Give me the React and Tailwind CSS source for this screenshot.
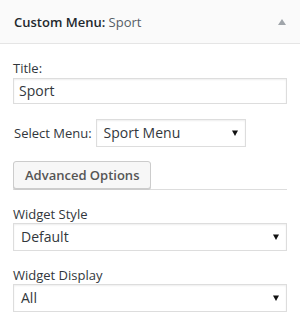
import React from "react";

function Arrow() {
  return (
    <svg width="6" height="6" viewBox="0 0 6 6" className="shrink-0">
      <path d="M0 0.5 H6 L3 6 Z" fill="#111" />
    </svg>
  );
}

function SelectBox({ value, className }) {
  return (
    <div
      className={`flex items-center justify-between h-[28px] border border-[#dddddd] bg-white pl-[7px] pr-[7px] text-[14px] text-[#32373c] shadow-[inset_0_1px_2px_rgba(0,0,0,0.07)] ${className}`}
    >
      <span>{value}</span>
      <Arrow />
    </div>
  );
}

export default function App() {
  return (
    <div
      className="w-[300px] h-[332px] bg-white text-[13px] leading-[18px] text-[#23282d]"
      style={{ fontFamily: '"Open Sans", sans-serif' }}
    >
      {/* Widget header */}
      <div className="flex items-center justify-between h-[44px] bg-[#fafafa] border-b border-[#e5e5e5] pl-[14px] pr-[14px]">
        <h3 className="font-semibold text-[#23282d]">
          Custom Menu: <span className="font-normal text-[#555d66]">Sport</span>
        </h3>
        <svg width="8" height="6" viewBox="0 0 8 6">
          <path d="M0 6 L4 0 L8 6 Z" fill="#a0a5aa" />
        </svg>
      </div>

      {/* Widget body */}
      <div className="px-[13px] pt-[15px]">
        <label className="block text-[#32373c]">Title:</label>
        <div className="flex items-center h-[26px] mt-[1px] border border-[#dddddd] px-[5px] text-[14px] text-[#32373c] shadow-[inset_0_1px_2px_rgba(0,0,0,0.07)]">
          Sport
        </div>

        <div className="flex items-center gap-[4px] mt-[15px]">
          <span className="pl-[1px] text-[#32373c]">Select Menu:</span>
          <SelectBox value="Sport Menu" className="w-[150px]" />
        </div>

        <div className="mt-[14px] border-b border-[#dddddd]">
          <button className="h-[28px] px-[11px] bg-[#f7f7f7] border border-[#cccccc] rounded-[3px] shadow-[0_1px_0_#cccccc] font-semibold text-[#555555] leading-[26px]">
            Advanced Options
          </button>
        </div>

        <label className="block mt-[15px] text-[#32373c]">Widget Style</label>
        <SelectBox value="Default" />

        <label className="block mt-[15px] text-[#32373c]">Widget Display</label>
        <SelectBox value="All" />
      </div>
    </div>
  );
}
